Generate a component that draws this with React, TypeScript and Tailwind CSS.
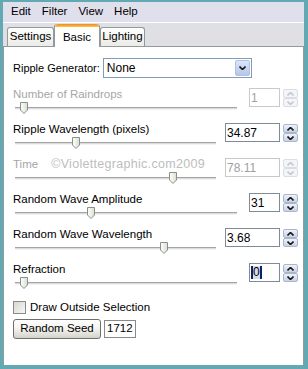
import React from "react";

const FONT = { fontFamily: '"Liberation Sans", Arial, sans-serif' };

function Chevron({ up, color = "#1a1a1a" }: { up?: boolean; color?: string }) {
  return (
    <svg width="7" height="4" viewBox="0 0 7 4">
      {up ? (
        <path d="M0.5 3.5 L3.5 0.5 L6.5 3.5" fill="none" stroke={color} strokeWidth="1.6" />
      ) : (
        <path d="M0.5 0.5 L3.5 3.5 L6.5 0.5" fill="none" stroke={color} strokeWidth="1.6" />
      )}
    </svg>
  );
}

function Spinner({ disabled }: { disabled?: boolean }) {
  const btn = disabled
    ? "flex h-[9px] w-[15px] items-center justify-center rounded-[2px] border border-[#d8dde6] bg-[#f4f5f8]"
    : "flex h-[9px] w-[15px] items-center justify-center rounded-[2px] border border-[#a9b6cc] bg-gradient-to-b from-[#eef2fb] to-[#c9d3e6]";
  const c = disabled ? "#c4c8d0" : "#1a1a1a";
  return (
    <div className="flex h-[20px] flex-col justify-between py-[1px]">
      <div className={btn}>
        <Chevron up color={c} />
      </div>
      <div className={btn}>
        <Chevron color={c} />
      </div>
    </div>
  );
}

function Thumb() {
  return (
    <svg width="8" height="12" viewBox="0 0 8 12">
      <defs>
        <linearGradient id="tg" x1="0" y1="0" x2="1" y2="0">
          <stop offset="0" stopColor="#ffffff" />
          <stop offset="1" stopColor="#d9e0d2" />
        </linearGradient>
      </defs>
      <path d="M0.5 0.5 H7.5 V8 L4 11.5 L0.5 8 Z" fill="url(#tg)" stroke="#8a8f8a" strokeWidth="1" />
    </svg>
  );
}

function Block({
  label,
  value,
  wide,
  disabled,
  thumb,
  watermark,
  cursor,
}: {
  label: string;
  value: string;
  wide?: boolean;
  disabled?: boolean;
  thumb: number;
  watermark?: boolean;
  cursor?: boolean;
}) {
  return (
    <div className="flex h-[35px] items-start">
      <div className={wide ? "w-[203px]" : "w-[224px]"}>
        <div
          className={
            "flex h-[14px] items-center whitespace-nowrap text-[11.5px] leading-[14px] " +
            (disabled ? "text-[#a6a6a6]" : "text-[#000]")
          }
        >
          <span>{label}</span>
          {watermark && (
            <span className="ml-[13px] text-[12.5px] tracking-[0.3px] text-[#bdbdbd]">©Violettegraphic.com2009</span>
          )}
        </div>
        <div className="relative ml-[2px] mt-[6px] h-[3px] border-t border-b border-t-[#a4a4a4] border-b-[#f3f3f3] bg-[#dcdcdc]">
          <div className="absolute top-[-6px]" style={{ left: thumb }}>
            <Thumb />
          </div>
        </div>
      </div>
      <div className="ml-auto flex items-start gap-[3px] pt-[1px]">
        <div
          className={
            "flex h-[19px] items-center border px-[1px] text-[12px] " +
            (wide ? "w-[55px] " : "w-[31px] ") +
            (disabled ? "border-[#c9c9c9] text-[#a0a0a0]" : "border-[#7f8b99] text-black")
          }
        >
          {cursor ? (
            <span className="border-x-[2px] border-[#0a246a] bg-[#d7dcea] leading-[13px] text-black">{value}</span>
          ) : (
            <span>{value}</span>
          )}
        </div>
        <Spinner disabled={disabled} />
      </div>
    </div>
  );
}

export default function App() {
  return (
    <div style={FONT} className="flex h-[369px] w-[308px] flex-col bg-[#62a9b3] pb-[4px] pl-[3px] pr-[4px] pt-[2px]">
      {/* Menu bar */}
      <div className="flex h-[20px] items-center gap-[11px] bg-[#e0e0ed] pl-[8px] text-[11.5px] text-black">
        <span>Edit</span>
        <span>Filter</span>
        <span>View</span>
        <span>Help</span>
      </div>
      <div className="h-[1px] bg-white" />
      {/* Tab strip */}
      <div className="flex h-[23px] items-end bg-[#e0dfe3] pl-[4px] text-[11.5px]">
        <div className="flex h-[19px] w-[47px] items-center justify-center rounded-t-[3px] border border-b-0 border-[#919b9c] bg-gradient-to-b from-white to-[#ecebe6]">
          Settings
        </div>
        <div className="relative z-10 mb-[-1px] flex h-[23px] w-[46px] flex-col rounded-t-[3px] border-x border-[#919b9c] bg-white">
          <div className="h-[3px] rounded-t-[3px] bg-gradient-to-b from-[#e68b2c] to-[#ffc73c]" />
          <div className="flex flex-1 items-start justify-center pt-[2px]">Basic</div>
        </div>
        <div className="flex h-[19px] w-[45px] items-center justify-center rounded-t-[3px] border border-b-0 border-[#919b9c] bg-gradient-to-b from-white to-[#ecebe6]">
          Lighting
        </div>
      </div>
      {/* Panel */}
      <div className="flex flex-1 flex-col border border-b-0 border-[#919b9c] bg-white pl-[9px] pr-[5px] pt-[11px] text-[11.5px]">
        <div className="flex h-[20px] items-center">
          <span className="shrink-0 whitespace-nowrap text-[11px]">Ripple Generator:</span>
          <div className="ml-[3px] flex h-[20px] w-[149px] items-center justify-between border border-[#7f9db9] pl-[3px] pr-[1px]">
            <span className="text-[12px]">None</span>
            <div className="flex h-[16px] w-[15px] items-center justify-center rounded-[2px] border border-[#b3c2dc] bg-gradient-to-b from-[#dce6fb] to-[#b6c6e8]">
              <Chevron />
            </div>
          </div>
        </div>
        <div className="h-[9px]" />
        <Block label="Number of Raindrops" value="1" disabled thumb={5} />
        <Block label="Ripple Wavelength (pixels)" value="34.87" wide thumb={57} />
        <Block label="Time" value="78.11" wide disabled thumb={154} watermark />
        <Block label="Random Wave Amplitude" value="31" thumb={72} />
        <Block label="Random Wave Wavelength" value="3.68" wide thumb={145} />
        <Block label="Refraction" value="0" thumb={5} cursor />
        <div className="mt-[4px] flex h-[13px] items-center gap-[4px]">
          <div className="h-[13px] w-[13px] border border-[#8b8b8b] bg-gradient-to-br from-[#d8d8d2] to-[#f6f6f4]" />
          <span className="whitespace-nowrap">Draw Outside Selection</span>
        </div>
        <div className="mt-[5px] flex items-center gap-[3px]">
          <div className="flex h-[20px] w-[88px] items-center justify-center rounded-[3px] border border-[#6f6f6f] bg-gradient-to-b from-white via-[#f2f2ee] to-[#d4d2ca]">
            Random Seed
          </div>
          <div className="flex h-[18px] w-[32px] items-center border border-[#8a8a8a] px-[2px]">1712</div>
        </div>
      </div>
    </div>
  );
}
